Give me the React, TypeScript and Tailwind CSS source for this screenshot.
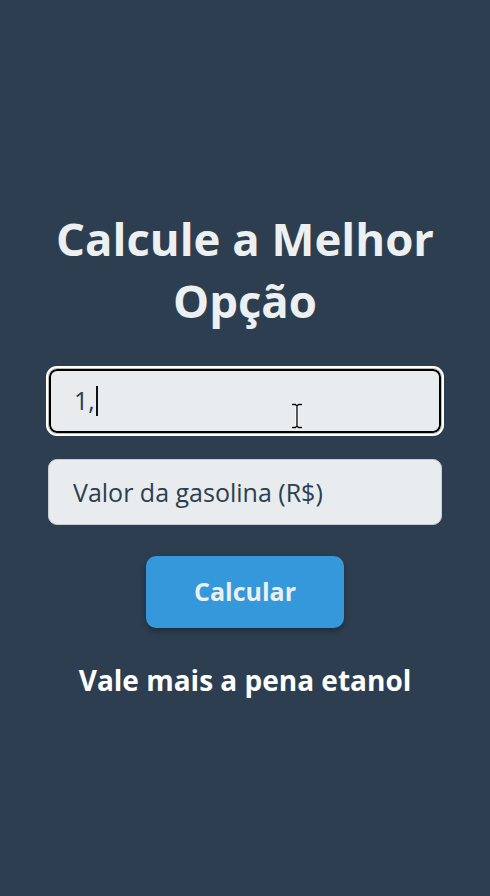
import { useState } from "react";

function IBeam() {
  return (
    <svg
      width="14"
      height="26"
      viewBox="0 0 14 26"
      className="absolute left-[290px] top-[403px] pointer-events-none"
    >
      <path d="M2 1.5h3.5l1.5 1.5 1.5-1.5H12M7 3v20M2 24.5h3.5L7 23l1.5 1.5H12" stroke="#fff" strokeWidth="3" fill="none" />
      <path d="M2 1.5h3.5l1.5 1.5 1.5-1.5H12M7 3v20M2 24.5h3.5L7 23l1.5 1.5H12" stroke="#000" strokeWidth="1.3" fill="none" />
    </svg>
  );
}

export default function App() {
  const [gas, setGas] = useState("");

  return (
    <div
      className="relative min-h-[896px] w-full bg-[#2c3e50] flex flex-col items-center pt-[207px]"
      style={{ fontFamily: '"Open Sans", "Noto Sans", Arial, sans-serif' }}
    >
      <h1 className="text-[45.5px] leading-[62px] font-bold text-[#ecf0f1] text-center">
        Calcule a Melhor
        <br />
        Opção
      </h1>

      {/* Input etanol (em foco) */}
      <div className="mt-[37px] w-[394px] h-[66px] rounded-[9px] bg-[#e8ecef] border border-[#bbb] shadow-[0_0_0_2px_#fff,inset_0_0_0_2px_#000] flex items-center pl-[25px] text-[25px] text-[#2c3e50]">
        <span>1,</span>
        <span className="ml-[1px] w-[2px] h-[30px] bg-[#111]" />
      </div>

      <input
        value={gas}
        onChange={(e) => setGas(e.target.value)}
        placeholder="Valor da gasolina (R$)"
        className="mt-[25px] w-[394px] h-[66px] rounded-[9px] bg-[#e8ecef] border border-[#c8ccd0] pl-[24px] text-[25px] text-[#2c3e50] placeholder:text-[#2c3e50] outline-none"
      />

      <button className="mt-[31px] w-[198px] h-[72px] rounded-[10px] bg-[#3498db] text-[#ecf0f1] text-[25px] font-bold shadow-[0_3px_6px_rgba(0,0,0,0.3)]">
        Calcular
      </button>

      <p className="mt-[33px] text-[28px] leading-[39px] font-bold text-white">Vale mais a pena etanol</p>

      <IBeam />
    </div>
  );
}
